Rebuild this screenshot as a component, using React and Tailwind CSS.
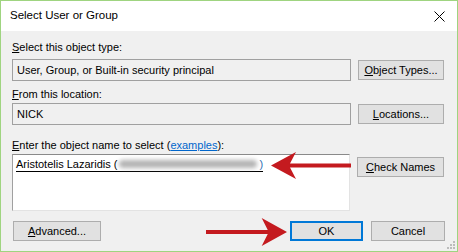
import React from 'react'

const font = { fontFamily: '"Liberation Sans", Arial, sans-serif' }

function Btn({ children, primary, className = '' }) {
    return (
        <div className={`h-[20px] flex items-center justify-center bg-[#e1e1e1] text-[11px] text-black ${primary ? 'border-2 border-[#0078d7]' : 'border border-[#adadad]'} ${className}`}>
            {children}
        </div>
    )
}

function Arrow({ className, flip }) {
    // swept red arrow used as annotation
    return (
        <svg className={className} viewBox="0 0 80 28" preserveAspectRatio="none">
            <g transform={flip ? 'translate(80,0) scale(-1,1)' : undefined}>
                <polygon
                    points="0,14 25,0 19,12 80,12 80,16 19,16 25,28"
                    fill="#c41a1f"
                />
            </g>
        </svg>
    )
}

function App() {
    return (
        <div className='w-[458px] h-[252px] border border-[#9fd480] flex flex-col relative overflow-hidden' style={font}>
            {/* Title bar */}
            <div className='h-[30px] bg-white flex items-center justify-between pl-[9px] pr-[10px] shrink-0'>
                <span className='text-[11.5px] text-black'>Select User or Group</span>
                <svg width="11" height="11" viewBox="0 0 11 11" className='mr-[2px]'>
                    <path d="M0.5 0.5 L10.5 10.5 M10.5 0.5 L0.5 10.5" stroke="#000" strokeWidth="1" />
                </svg>
            </div>

            {/* Body */}
            <div className='flex-1 bg-[#f0f0f0] pl-[11px] pr-[12px] pt-[8px] text-[11px] text-black'>
                <div className='h-[16px] leading-[16px]'><u>S</u>elect this object type:</div>
                <div className='mt-[4px] flex items-center gap-[7px]'>
                    <div className='w-[339px] h-[22px] border border-[#a0a0a0] flex items-center pl-[4px]'>
                        User, Group, or Built-in security principal
                    </div>
                    <Btn className='w-[86px]'><u>O</u>bject Types...</Btn>
                </div>

                <div className='mt-[5px] h-[16px] leading-[16px]'><u>F</u>rom this location:</div>
                <div className='mt-[1px] flex items-center gap-[7px]'>
                    <div className='w-[339px] h-[22px] border border-[#a0a0a0] flex items-center pl-[4px]'>
                        NICK
                    </div>
                    <Btn className='w-[86px]'><u>L</u>ocations...</Btn>
                </div>

                <div className='mt-[12px] h-[16px] leading-[16px]'>
                    <u>E</u>nter the object name to select (<span className='text-[#0066cc] underline'>examples</span>):
                </div>
                <div className='mt-[1px] flex items-start gap-[7px]'>
                    <div className='w-[338px] h-[57px] bg-white border-t border-l border-t-[#8a8a8a] border-l-[#a0a0a0] border-r border-b border-r-[#e3e3e3] border-b-[#e3e3e3] pl-[3px] pt-[1px]'>
                        <div className='inline-flex items-center border-b border-black leading-[14px] h-[15px]'>
                            <span>Aristotelis Lazaridis (</span>
                            <span className='inline-block w-[138px] h-[8px] bg-[#b4b4b4] blur-[2px] rounded-full mx-[2px]'></span>
                            <span className='text-[#2f6fb3]'>)</span>
                        </div>
                    </div>
                    <Btn className='w-[87px] mt-[3px]'><u>C</u>heck Names</Btn>
                </div>

                <div className='mt-[10px] flex items-center'>
                    <Btn className='w-[88px] ml-[1px]'><u>A</u>dvanced...</Btn>
                    <div className='flex-1'></div>
                    <Btn primary className='w-[73px] h-[20px]'>OK</Btn>
                    <Btn className='w-[74px] ml-[8px]'>Cancel</Btn>
                </div>
            </div>

            {/* resize grip */}
            <svg className='absolute right-[2px] bottom-[2px]' width="9" height="9" viewBox="0 0 9 9">
                {[[7, 1], [4, 4], [7, 4], [1, 7], [4, 7], [7, 7]].map(([x, y], i) => (
                    <rect key={i} x={x} y={y} width="2" height="2" fill="#bcbcbc" />
                ))}
            </svg>

            {/* annotation arrows */}
            <Arrow className='absolute left-[270px] top-[151px] w-[80px] h-[27px]' />
            <Arrow flip className='absolute left-[205px] top-[217px] w-[81px] h-[28px]' />
        </div>
    )
}

export default App
